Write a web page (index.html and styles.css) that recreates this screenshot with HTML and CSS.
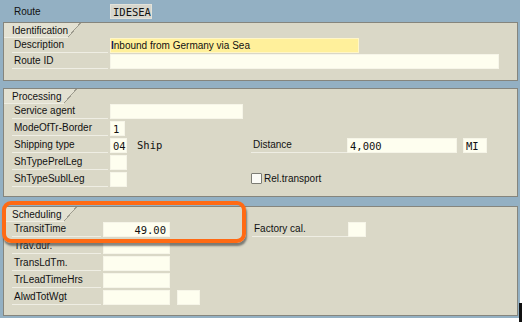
FILE: index.html
```html
<!DOCTYPE html>
<html>
<head>
<meta charset="utf-8">
<link rel="stylesheet" href="styles.css">
</head>
<body>
<div class="screen">
  <div class="toprow">
    <span class="lbl plain">Route</span>
    <span class="fld ro mono w-route">IDESEA</span>
  </div>

  <section class="group g-ident">
    <div class="tab"><span class="tab-text w-ident">Identification</span><span class="tab-end"></span></div>
    <div class="rows gap1">
      <div class="row"><span class="lbl">Description</span><span class="fld focus w-desc"><span class="cursor">I</span>nbound from Germany via Sea</span></div>
      <div class="row"><span class="lbl">Route ID</span><span class="fld w-routeid"></span></div>
    </div>
  </section>

  <section class="group g-proc">
    <div class="tab"><span class="tab-text w-proc">Processing</span><span class="tab-end"></span></div>
    <div class="rows">
      <div class="row"><span class="lbl">Service agent</span><span class="fld w-agent"></span></div>
      <div class="row"><span class="lbl">ModeOfTr-Border</span><span class="fld mono w-1">1</span></div>
      <div class="row">
        <div class="left">
          <span class="lbl">Shipping type</span><span class="fld mono w-2">04</span><span class="mono desc">Ship</span>
        </div>
        <span class="lbl wide">Distance</span><span class="fld mono w-dist">4,000</span><span class="fld mono w-unit">MI</span>
      </div>
      <div class="row"><span class="lbl">ShTypePrelLeg</span><span class="fld w-2"></span></div>
      <div class="row">
        <div class="left"><span class="lbl">ShTypeSublLeg</span><span class="fld w-2"></span></div>
        <span class="check"></span><span class="chk-text">Rel.transport</span>
      </div>
    </div>
  </section>

  <section class="group g-sched">
    <div class="tab"><span class="tab-text w-proc">Scheduling</span><span class="tab-end"></span></div>
    <div class="rows">
      <div class="row">
        <div class="left sl"><span class="lbl short">TransitTime</span><span class="fld mono num w-time">49.00</span></div>
        <span class="lbl wide">Factory cal.</span><span class="fld w-cal"></span>
      </div>
      <div class="row"><span class="lbl short">Trav.dur.</span><span class="fld w-time"></span></div>
      <div class="row"><span class="lbl short">TransLdTm.</span><span class="fld w-time"></span></div>
      <div class="row"><span class="lbl short">TrLeadTimeHrs</span><span class="fld w-time"></span></div>
      <div class="row"><span class="lbl short">AlwdTotWgt</span><span class="fld w-time"></span><span class="fld w-wunit"></span></div>
    </div>
  </section>

  <div class="highlight"></div>
  <div class="edge"></div>
</div>
</body>
</html>
```

FILE: styles.css
```css
* { box-sizing: border-box; }
html, body { margin: 0; padding: 0; }
body {
  background: #ffffff;
  width: 522px;
  height: 322px;
  overflow: hidden;
  font-family: "Liberation Sans", Arial, sans-serif;
  font-size: 10px;
  color: #111111;
}
.screen {
  position: relative;
  width: 520px;
  height: 318px;
  background: #93b0c3;
  padding-left: 3px;
}
.toprow {
  height: 22px;
  display: flex;
  align-items: flex-start;
  padding-top: 4px;
  padding-left: 9px;
}
.group {
  width: 515px;
  background: #dad8c7;
  border: 1px solid #85857d;
  padding-left: 8px;
}
.g-ident { height: 59px; }
.g-proc { margin-top: 7px; height: 109px; }
.g-sched { margin-top: 9px; height: 110px; }

.tab {
  display: flex;
  height: 15px;
  margin-left: -8px;
}
.tab-text {
  background: #e3e1d2;
  padding-left: 8px;
  line-height: 15px;
  height: 15px;
  white-space: nowrap;
  border-bottom: 1px solid #eeede2;
}
.w-ident { width: 64px; }
.w-proc { width: 60px; }
.tab-end {
  width: 13px;
  height: 15px;
  background: linear-gradient(to bottom right, #e3e1d2 calc(50% - 1px), #9d9b8e calc(50% - 1px), #9d9b8e 50%, transparent 50%);
}

.rows { display: flex; flex-direction: column; gap: 2px; }
.rows.gap1 { gap: 1px; }
.row { display: flex; height: 15px; align-items: stretch; }
.left { display: flex; width: 239px; }
.left.sl { width: 240px; }

.lbl {
  width: 96px;
  margin-right: 2px;
  padding-left: 2px;
  line-height: 14px;
  border-bottom: 1px solid #efeee4;
  white-space: nowrap;
}
.lbl.plain { border-bottom: none; line-height: 15px; }
.lbl.short { width: 89px; }
.lbl.wide { width: 96px; margin-right: 0; }

.fld {
  height: 15px;
  line-height: 14px;
  background: #fefeef;
  border: 1px solid #f6f5e8;
  padding-left: 2px;
  white-space: nowrap;
  overflow: hidden;
}
.fld.ro { background: #d6d6cd; border-color: #e2e2da; }
.fld.focus { background: #fff09b; border-color: #fff6c8; padding-left: 0; }
.mono { font-family: "DejaVu Sans Mono", "Liberation Mono", monospace; font-size: 10.5px; }
.fld.num { text-align: right; padding-right: 3px; }
.cursor { color: #0a1466; font-weight: bold; }

.w-route { width: 42px; }
.w-desc { width: 249px; }
.w-routeid { width: 389px; }
.w-agent { width: 133px; }
.w-1 { width: 15px; }
.w-2 { width: 17px; }
.desc { margin-left: 10px; line-height: 14px; }
.w-dist { width: 110px; }
.w-unit { width: 24px; margin-left: 6px; }
.w-time { width: 67px; }
.w-cal { width: 18px; }
.w-wunit { width: 23px; margin-left: 7px; }

.check {
  width: 11px;
  height: 11px;
  margin-top: 1px;
  background: #fbfbf6;
  border: 1px solid #7c7c74;
  border-radius: 1px;
}
.chk-text { margin-left: 2px; line-height: 14px; }

.highlight {
  position: absolute;
  left: 2px;
  top: 201px;
  width: 244px;
  height: 42px;
  border: 4.5px solid #ff6a14;
  border-radius: 9px;
  box-shadow: 1px 3px 2px rgba(70, 70, 70, 0.65);
}
.edge {
  position: absolute;
  left: 519px;
  top: 303px;
  width: 3px;
  height: 19px;
  background: #111111;
}
```
